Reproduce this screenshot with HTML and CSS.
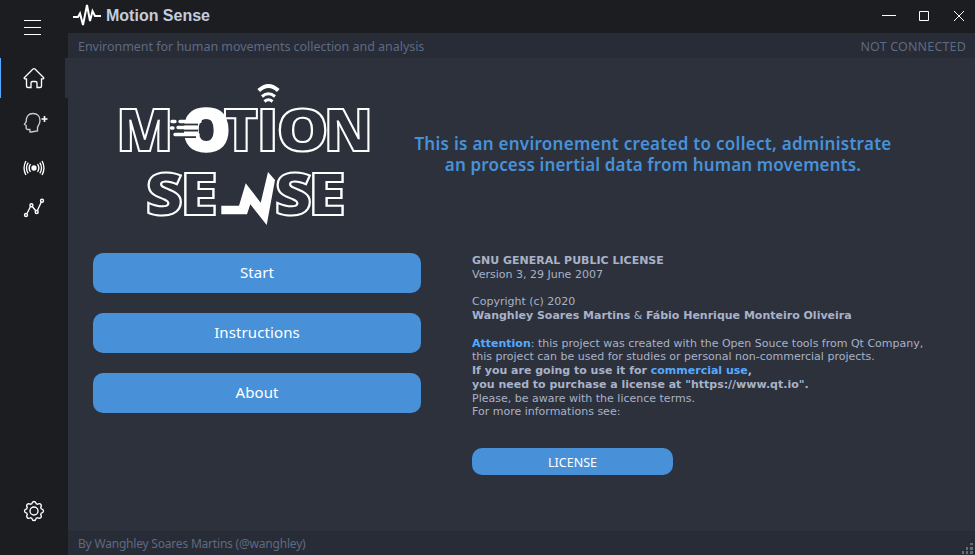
FILE: index.html
```html
<!DOCTYPE html>
<html lang="en">
<head>
<meta charset="utf-8">
<title>Motion Sense</title>
<link rel="stylesheet" href="styles.css">
</head>
<body>
<div class="window">
  <nav class="sidebar">
    <a class="nav-item menu"><svg width="20" height="18" viewBox="0 0 20 18"><path d="M1 1.500H18M1 8.500H18M1 15.500H18"/></svg></a>
    <a class="nav-item home"><svg width="22" height="22" viewBox="0 0 22 22"><path d="M3.500 11.800H1.600Q.9 11.200 1.500 10.500L10 2Q11 1.300 12 2L20.500 10.500Q21.100 11.200 20.400 11.800H18.500V19Q18.500 20.500 17 20.500H14V16Q14 14.500 12.500 14.500H9.500Q8 14.500 8 16V20.500H5Q3.500 20.500 3.500 19Z"/></svg></a>
    <a class="nav-item user"><svg width="26" height="22" viewBox="0 0 26 22"><path class="soft" d="M7 20L6.800 17.500H4.500Q3 17.400 3.200 15.500V13.500L1.500 12.400L3.200 9.500C3 4.500 5.500 1.500 10 1.500C14.500 1.500 17 4.500 17 8.500C17 12 15 13.500 14.500 15.500V19L8 20Z"/><path class="plus" d="M21.500 4V10M18.500 7H24.500"/></svg></a>
    <a class="nav-item signal"><svg width="22" height="18" viewBox="0 0 22 18"><circle class="solid" cx="11" cy="9" r="2"/><path d="M7.500 5.200Q4.800 9 7.500 12.800M5.200 3.600Q1.800 9 5.200 14.400M2.900 2Q-.8 9 2.900 16M14.500 5.200Q17.200 9 14.500 12.800M16.800 3.600Q20.200 9 16.800 14.400M19.100 2Q22.800 9 19.100 16"/></svg></a>
    <a class="nav-item graph"><svg width="22" height="20" viewBox="0 0 22 20"><path d="M4 15.500L7.500 8.500M9.300 8.500L12.900 13M14.400 12.500L18.300 4"/><circle cx="3" cy="17" r="1.500"/><circle cx="8.400" cy="7.200" r="1.500"/><circle cx="13.700" cy="14" r="1.500"/><circle cx="19" cy="2.700" r="1.500"/></svg></a>
    <a class="nav-item gear"><svg width="22" height="22" viewBox="-11 -11 22 22"><circle r="4"/><path d="M-2.200-7.300Q-1.700-9.500 0-9.500T2.200-7.300L3.600-6.700Q5.500-8 6.700-6.700T6.700-3.600L7.300-2.200Q9.500-1.700 9.500 0T7.300 2.200L6.700 3.600Q8 5.500 6.700 6.700T3.600 6.700L2.200 7.300Q1.700 9.500 0 9.500T-2.200 7.300L-3.600 6.700Q-5.500 8-6.700 6.700T-6.700 3.600L-7.300 2.200Q-9.500 1.700-9.500 0T-7.300-2.200L-6.700-3.600Q-8-5.500-6.700-6.700T-3.600-6.700Z"/></svg></a>
  </nav>
  <div class="content">
    <header class="titlebar">
      <svg class="pulse" width="30" height="26" viewBox="0 0 30 26"><path d="M1 14H6L8 10.500L11 22L15 2L18 18L20.500 8L23 13H29"/></svg>
      <h1>Motion Sense</h1>
      <div class="controls">
        <svg width="14" height="14" viewBox="0 0 14 14"><path d="M0 6.500H14"/></svg>
        <svg width="10" height="10" viewBox="0 0 10 10"><path d="M.5.500H9.500V9.500H.5Z"/></svg>
        <svg width="10" height="10" viewBox="0 0 10 10"><path d="M0 0L10 10M10 0L0 10"/></svg>
      </div>
    </header>
    <div class="subbar"><span class="subtitle">Environment for human movements collection and analysis</span><span class="status">NOT CONNECTED</span></div>
    <main>
      <section class="left">
        <svg class="logo" width="260" height="150" viewBox="115 80 260 150">
          <g class="letters">
            <text transform="translate(116.200 151)">M</text>
            <text transform="translate(223.500 151)">T</text>
            <text transform="translate(256.500 151) scale(1.08 1)">I</text>
            <text transform="translate(276.500 151) scale(1.110 1)">O</text>
            <text transform="translate(323.700 151)">N</text>
            <text transform="translate(145.500 215) scale(1.100 1)">S</text>
            <text transform="translate(180 215) scale(1.170 1)">E</text>
            <text transform="translate(274.500 215) scale(1.100 1)">S</text>
            <text transform="translate(308 215) scale(1.170 1)">E</text>
          </g>
          <text class="fast" transform="translate(182 151) scale(1.030 1)">O</text>
          <g class="gap"><path d="M183 124.500H198M181 130.500H198M184 137H196"/></g>
          <g class="speed"><path d="M172 121.500H175M180 121.500H200M171.500 128H173M178 127.500H197M175 134.500H198"/></g>
          <path class="mark" d="M221.300 205.700H239L245.700 183.300L260.700 202.700L268 172L275 180L266.700 225L250.300 204.300L247 214.300H221.300Z"/>
          <g class="waves"><path class="outer" d="M258.700 90.500Q268.500 81.500 278.300 90.500"/><path d="M262 96.500Q268.500 91 275 96.500"/><path d="M264.500 101.500Q268.500 98 272.500 101.500"/></g>
        </svg>
        <button>Start</button>
        <button>Instructions</button>
        <button>About</button>
      </section>
      <section class="right">
        <h2><span>This is an environement created to collect, administrate</span><br><span class="second">an process inertial data from human movements.</span></h2>
        <div class="license">
          <b>GNU GENERAL PUBLIC LICENSE</b><br>
          Version 3, 29 June 2007<br><br>
          Copyright (c) 2020<br>
          <b>Wanghley Soares Martins</b> &amp; <b>Fábio Henrique Monteiro Oliveira</b><br><br>
          <b class="accent">Attention</b>: this project was created with the Open Souce tools from Qt Company,<br>
          this project can be used for studies or personal non-commercial projects.<br>
          <b>If you are going to use it for <span class="accent">commercial use</span>,</b><br>
          <b>you need to purchase a license at "https://www.qt.io".</b><br>
          Please, be aware with the licence terms.<br>
          For more informations see:
        </div>
        <button class="small">LICENSE</button>
      </section>
    </main>
    <footer><span>By Wanghley Soares Martins (@wanghley)</span>
      <svg class="grip" width="11" height="11" viewBox="0 0 11 11"><path d="M8 0h3v2H8zM4 4h2v3H4zM8 4h3v3H8zM0 8h2v3H0zM4 8h2v3H4zM8 8h3v3H8z"/></svg>
    </footer>
  </div>
</div>
</body>
</html>
```
FILE: styles.css
```css
* { box-sizing: border-box; }
body { margin: 0; background: #1c1d20; font-family: "Noto Sans", sans-serif; }
svg { display: block; flex: none; fill: none; stroke: #fff; }
.window { display: flex; width: 975px; height: 555px; overflow: hidden; }
.sidebar { width: 68px; flex: none; display: flex; flex-direction: column; background: #1c1d20; }
.nav-item { display: flex; align-items: center; padding-left: 23px; height: 40px; flex: none; }
.nav-item svg { stroke-width: 1.35; }
.nav-item.menu { height: 58px; padding-bottom: 2px; }
.nav-item.menu svg { stroke-width: 1; }
.home { border-left: 1px solid #55aaff; border-right: 3px solid #2c313c; padding-left: 22px; }
.user { margin-top: 5px; }
.user .soft { stroke: #ccc; }
.user .plus { stroke-width: 1.6; }
.signal { margin-top: 5px; }
.solid { fill: #fff; }
.gear { margin-top: auto; margin-bottom: 24px; }
.content { flex: 1; display: flex; flex-direction: column; min-width: 0; }
.titlebar { height: 33px; display: flex; align-items: center; padding: 0 11px 2px 4px; }
.pulse { stroke-width: 2; }
h1 { margin: 0 0 0 4px; font: bold 16px/20px "Liberation Sans", sans-serif; color: #c3ccdf; }
.controls { margin-left: auto; display: flex; align-items: center; gap: 23px; }
.controls svg:last-child { margin-left: 2px; }
.subbar { height: 25px; background: #272c36; display: flex; justify-content: space-between; align-items: center; padding: 1px 9px 0 10px; color: #5f6a82; font-size: 12.5px; }
.subtitle { letter-spacing: -.035px; }
.status { letter-spacing: .17px; }
main { flex: 1; background: #2c313c; display: flex; }
.left { width: 353px; padding: 22px 0 0 25px; display: flex; flex-direction: column; }
.logo { margin: 0 0 23px 22px; }
.letters text, .fast { font: 800 59px "Open Sans", sans-serif; }
.letters { stroke-width: 2; }
.fast { fill: #fff; stroke-width: 2.4; }
.gap { stroke: #2c313c; stroke-width: 2; }
.speed { stroke-width: 3.4; stroke-linecap: round; }
.mark { fill: #fff; stroke: none; }
.waves { stroke-width: 3; }
.outer { stroke-width: 4; }
button { display: block; border: 0; border-radius: 10px; background: #4891d9; color: #fff; height: 40px; width: 328px; margin: 0 0 20px; padding: 0 0 2px; font: 15px "Noto Sans", sans-serif; letter-spacing: .1px; flex: none; }
.right { flex: 1; padding-left: 51px; }
h2 { margin: 75px 0 0 -58px; width: 478px; height: 42px; text-align: center; white-space: nowrap; color: #4891d9; font: 600 17px/21px "Noto Sans", sans-serif; letter-spacing: .28px; }
.second { letter-spacing: .15px; }
.license { margin-top: 79px; height: 165px; font: 11px/13.75px "DejaVu Sans", sans-serif; color: #a9b2c8; white-space: nowrap; }
.accent { color: #55aaff; }
.small { width: 201px; height: 27px; margin: 29px 0 0; padding: 1px 0 0; font-size: 12.500px; letter-spacing: 0; }
footer { height: 24px; background: #272c36; color: #5f6a82; display: flex; justify-content: space-between; align-items: center; padding: 1px 2px 0 10px; font-size: 12px; letter-spacing: -.2px; }
.grip { fill: #686b72; stroke: none; align-self: flex-end; margin-bottom: 1px; }
```
